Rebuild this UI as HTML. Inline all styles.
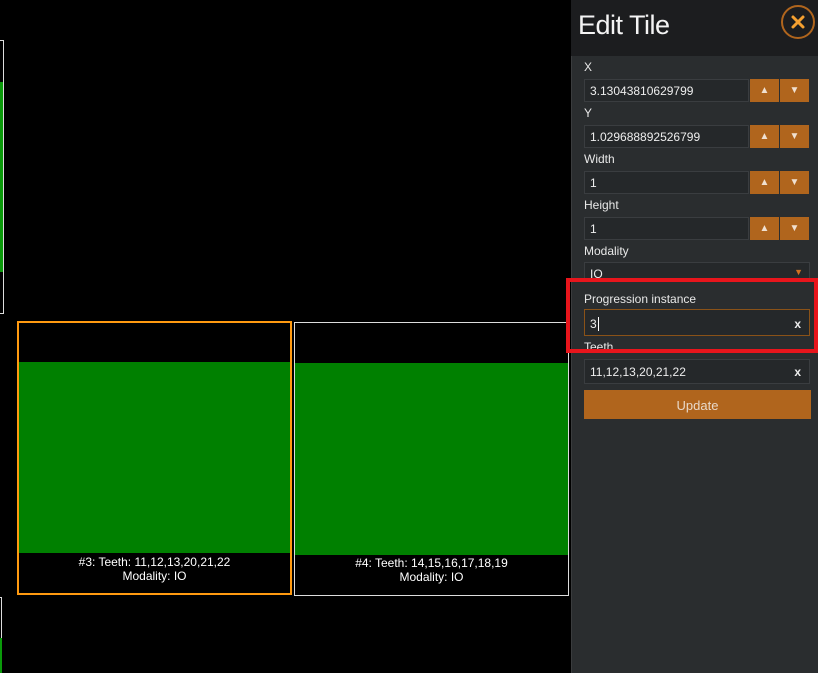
<!DOCTYPE html>
<html><head><style>
*{margin:0;padding:0;box-sizing:border-box}
html,body{width:818px;height:673px;overflow:hidden}
body{background:#000;position:relative;font-family:"Liberation Sans",sans-serif}
.a{position:absolute}
.lbl{position:absolute;left:584px;color:#e8e8e8;font-size:12px}
.inp{position:absolute;left:584px;height:23px;background:#25282a;border:1px solid #3a3d40;color:#eee;font-size:12px;padding:4px 0 0 5px}
.btn{position:absolute;width:29px;height:23px;background:#b0651d;color:#f0e0d0;font-size:10px;text-align:center;line-height:23px}
.x{position:absolute;right:8px;top:4px;font-size:12px;color:#eee;font-weight:bold}
.cap{position:absolute;width:100%;text-align:center;color:#fff;font-size:12px;line-height:14px}
</style></head><body>
<div class="a" style="left:-10px;top:40px;width:14px;height:274px;border:1px solid #ddd"></div>
<div class="a" style="left:0;top:82px;width:3px;height:190px;background:#0a9a0a"></div>
<div class="a" style="left:-10px;top:597px;width:12px;height:100px;border:1px solid #ddd"></div>
<div class="a" style="left:0;top:638px;width:2px;height:35px;background:#0a9a0a"></div>

<div class="a" style="left:17px;top:321px;width:275px;height:274px;border:2px solid #ff9a10">
<div class="a" style="left:0;top:39px;width:271px;height:191px;background:#008000"></div>
<div class="cap" style="top:232px">#3: Teeth: 11,12,13,20,21,22<br>Modality: IO</div>
</div>
<div class="a" style="left:294px;top:322px;width:275px;height:274px;border:1px solid #ddd">
<div class="a" style="left:0;top:40px;width:273px;height:192px;background:#008000"></div>
<div class="cap" style="top:233px">#4: Teeth: 14,15,16,17,18,19<br>Modality: IO</div>
</div>

<div class="a" style="left:571px;top:0;width:247px;height:673px;background:#2a2d2f;border-left:1px solid #3a3c3e"></div>
<div class="a" style="left:571px;top:0;width:247px;height:56px;background:#1c1d1f"></div>
<div class="a" style="left:578px;top:10px;color:#f4f4f4;font-size:27px;letter-spacing:-0.5px">Edit Tile</div>
<div class="a" style="left:781px;top:5px;width:34px;height:34px;border:2px solid #b0651d;border-radius:50%">
<svg width="30" height="30" style="position:absolute;left:0;top:0"><path d="M10 10L20 20M20 10L10 20" stroke="#f5a030" stroke-width="3" stroke-linecap="round"/></svg></div>

<div class="lbl" style="top:60px">X</div>
<div class="inp" style="top:79px;width:165px">3.13043810629799</div>
<div class="btn" style="left:750px;top:79px">▲</div><div class="btn" style="left:780px;top:79px">▼</div>
<div class="lbl" style="top:106px">Y</div>
<div class="inp" style="top:125px;width:165px">1.029688892526799</div>
<div class="btn" style="left:750px;top:125px">▲</div><div class="btn" style="left:780px;top:125px">▼</div>
<div class="lbl" style="top:152px">Width</div>
<div class="inp" style="top:171px;width:165px">1</div>
<div class="btn" style="left:750px;top:171px">▲</div><div class="btn" style="left:780px;top:171px">▼</div>
<div class="lbl" style="top:198px">Height</div>
<div class="inp" style="top:217px;width:165px">1</div>
<div class="btn" style="left:750px;top:217px">▲</div><div class="btn" style="left:780px;top:217px">▼</div>
<div class="lbl" style="top:244px">Modality</div>
<div class="inp" style="top:262px;width:226px;height:20px;overflow:hidden">IO<span style="position:absolute;right:6px;top:4px;color:#d07020;font-size:9px">▼</span></div>

<div class="lbl" style="top:340px">Teeth</div>
<div class="a" style="left:566px;top:278px;width:252px;height:75px;border:4px solid #e8151c"></div>
<div class="lbl" style="top:292px">Progression instance</div>
<div class="inp" style="top:309px;width:226px;height:27px;border-color:#8a5218;padding-top:7px">3<span style="border-left:1px solid #fff;margin-left:1px"></span><span class="x" style="top:7px">x</span></div>

<div class="inp" style="top:359px;width:226px;height:25px;padding-top:5px">11,12,13,20,21,22<span class="x" style="top:5px">x</span></div>
<div class="a" style="left:584px;top:390px;width:227px;height:29px;background:#b0651d;color:#e8d8c8;font-size:13px;text-align:center;line-height:31px">Update</div>
</body></html>
